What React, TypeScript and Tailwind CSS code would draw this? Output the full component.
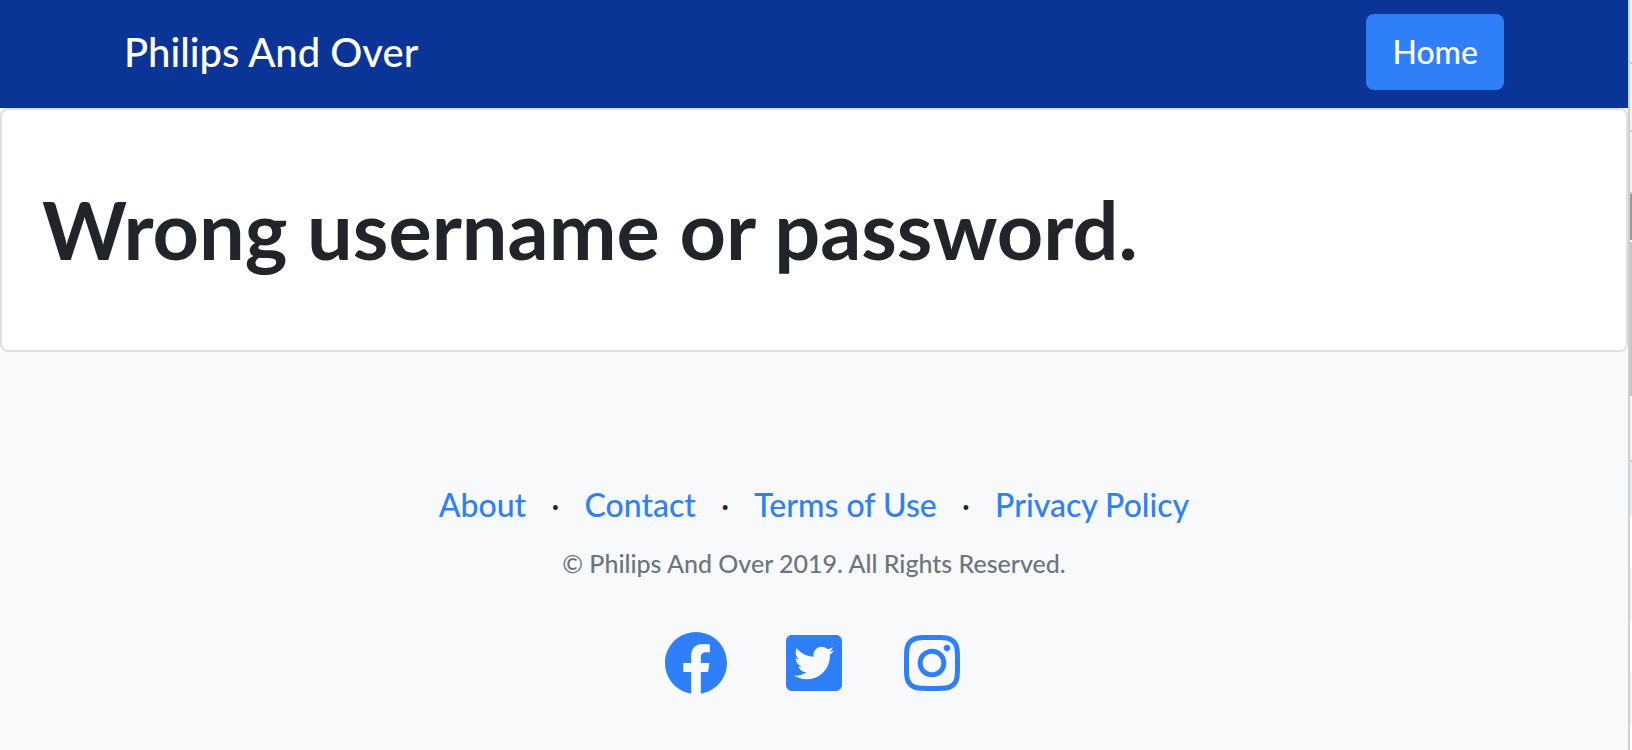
import { FaFacebook, FaTwitterSquare, FaInstagram } from "react-icons/fa";

const links = ["About", "Contact", "Terms of Use", "Privacy Policy"];

const edge = [
  "h-[62px] bg-[#f3f3f3]",
  "h-[2px] bg-[#cbcbcb]",
  "h-[66px] bg-[#f3f3f3]",
  "h-[2px] bg-[#cbcbcb]",
  "h-[60px] bg-[#f3f3f3]",
  "h-[2px] bg-[#cbcbcb]",
  "h-[46px] bg-[#999999]",
  "h-[2px] bg-white",
  "h-[154px] bg-[#c5c5c5]",
  "h-[64px] bg-[#f3f3f3]",
  "h-[2px] bg-[#cbcbcb]",
  "h-[54px] bg-[#dfedff]",
  "h-[52px] bg-white",
  "h-[52px] bg-[#f4f5f5]",
  "h-[52px] bg-white",
  "h-[52px] bg-[#f4f5f5]",
];

export default function App() {
  return (
    <div className="flex min-h-screen bg-[#f8f9fb] font-['Lato',sans-serif] text-[32px] leading-[48px] font-medium text-[#212529]">
      <div className="flex min-w-0 grow flex-col">
        <nav className="flex items-center justify-between bg-[#0a3496] px-[124px] pt-[14px] pb-[18px]">
          <a href="#" className="text-[40px] leading-[60px] text-white">Philips And Over</a>
          <a href="#" className="rounded-lg bg-[#2f7ff9] px-[26px] py-[14px] text-white">Home</a>
        </nav>
        <div className="bg-white">
          <main className="rounded-lg border-2 border-[#dfdfdf] bg-white px-10 pt-[71px] pb-[73px]">
            <h1 className="text-[81px] leading-[96px] font-bold">Wrong username or password.</h1>
          </main>
        </div>
        <footer className="flex flex-col items-center pt-[129px]">
          <ul className="flex gap-[25px]">
            {links.map((l, i) => (
              <li key={l} className="flex gap-[25px]">
                {i > 0 && <span className="font-normal">·</span>}
                <a href="#" className="text-[#2f7ff9]">{l}</a>
              </li>
            ))}
          </ul>
          <p className="mt-[14px] text-[25px] leading-[40px] text-[#6c757d]">© Philips And Over 2019. All Rights Reserved.</p>
          <div className="mt-12 flex gap-[54px] text-[64px] text-[#2f7ff9]">
            <a href="#" aria-label="Facebook"><FaFacebook /></a>
            <a href="#" aria-label="Twitter"><FaTwitterSquare /></a>
            <a href="#" aria-label="Instagram"><FaInstagram /></a>
          </div>
        </footer>
      </div>
      <div className="w-1 shrink-0 border-l-2 border-[#cfcfcf] bg-white">
        {edge.map((c, i) => <div key={i} className={c} />)}
      </div>
    </div>
  );
}
